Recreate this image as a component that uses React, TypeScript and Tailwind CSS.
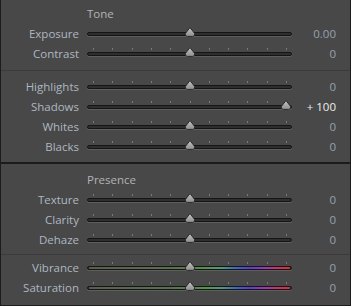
import React from "react";

type Row = { label: string; value: number; display: string; color?: boolean; ticks?: boolean };

const TICKS = Array.from({ length: 11 }, (_, i) => 6 + i * 19.3);

function Thumb({ x }: { x: number }) {
  return (
    <svg
      width="12"
      height="10"
      viewBox="0 0 12 10"
      className="absolute top-[-5px]"
      style={{ left: x - 6 }}
    >
      <defs>
        <linearGradient id="thumbFill" x1="0" y1="0" x2="0" y2="1">
          <stop offset="0" stopColor="#c4c4c4" />
          <stop offset="1" stopColor="#8e8e8e" />
        </linearGradient>
      </defs>
      <path
        d="M6 0.6 L10.6 6.4 Q11.2 9.4 8.6 9.4 L3.4 9.4 Q0.8 9.4 1.4 6.4 Z"
        fill="url(#thumbFill)"
        stroke="#222"
        strokeWidth="0.9"
      />
    </svg>
  );
}

function Slider({ row }: { row: Row }) {
  // -100..100 mapped onto the tick span
  const x = 6 + ((row.value + 100) / 200) * 193;
  return (
    <div className="relative h-[4px] w-[205px]">
      {row.ticks &&
        TICKS.map((t) => (
          <span
            key={t}
            className="absolute top-[-4px] h-[2px] w-px bg-[#7a7a7a]"
            style={{ left: Math.round(t) }}
          />
        ))}
      <div className="absolute inset-0 rounded-full border border-[#151515] bg-[#2e2e2e] shadow-[0_1px_0_#5e5e5e]">
        {row.color && (
          <div className="absolute inset-x-[1px] top-[0px] h-[2px] rounded-full bg-[linear-gradient(to_right,#56604f_0%,#5b6f4e_40%,#56924f_58%,#4c9a7e_66%,#3e62c4_74%,#5a3fd2_80%,#9a38b8_87%,#cc3266_94%,#da3030_100%)]" />
        )}
      </div>
      <Thumb x={x} />
    </div>
  );
}

function SliderRow({ row }: { row: Row }) {
  const bright = row.display.startsWith("+");
  return (
    <div className="flex h-[20px] items-center">
      <div className="w-[78px] text-right text-[#aeb7c1]">{row.label}</div>
      <div className="ml-[8px]">
        <Slider row={row} />
      </div>
      <div className={`w-[44px] text-right ${bright ? "text-[#eeeeee]" : "text-[#95a2b0]"}`}>
        {row.display}
      </div>
    </div>
  );
}

const zero = (label: string, extra: Partial<Row> = {}): Row => ({
  label,
  value: 0,
  display: "0",
  ticks: true,
  ...extra,
});

export default function App() {
  return (
    <div
      className="h-[306px] w-[351px] border-b border-l border-r border-[#1c1c1c] bg-[#484848] text-[11.5px] leading-[16px]"
      style={{ fontFamily: '"Open Sans", "Noto Sans", sans-serif' }}
    >
      <div className="pb-[2px] pl-[86px] pt-[6px] text-[#b3b3b3]">Tone</div>
      <div className="pb-[6px]">
        <SliderRow row={zero("Exposure", { display: "0.00", ticks: false })} />
        <SliderRow row={zero("Contrast")} />
      </div>
      <div className="h-px bg-[#3b3b3b]" />
      <div className="pb-[5px] pt-[6px]">
        <SliderRow row={zero("Highlights")} />
        <SliderRow row={zero("Shadows", { value: 100, display: "+ 100" })} />
        <SliderRow row={zero("Whites")} />
        <SliderRow row={zero("Blacks")} />
      </div>
      <div className="h-[2px] bg-[#1c1c1c]" />
      <div className="pb-[2px] pl-[86px] pt-[8px] text-[#b3b3b3]">Presence</div>
      <div className="pb-[4px]">
        <SliderRow row={zero("Texture")} />
        <SliderRow row={zero("Clarity")} />
        <SliderRow row={zero("Dehaze")} />
      </div>
      <div className="h-px bg-[#3b3b3b]" />
      <div className="pt-[3px]">
        <SliderRow row={zero("Vibrance", { color: true })} />
        <SliderRow row={zero("Saturation", { color: true })} />
      </div>
    </div>
  );
}
